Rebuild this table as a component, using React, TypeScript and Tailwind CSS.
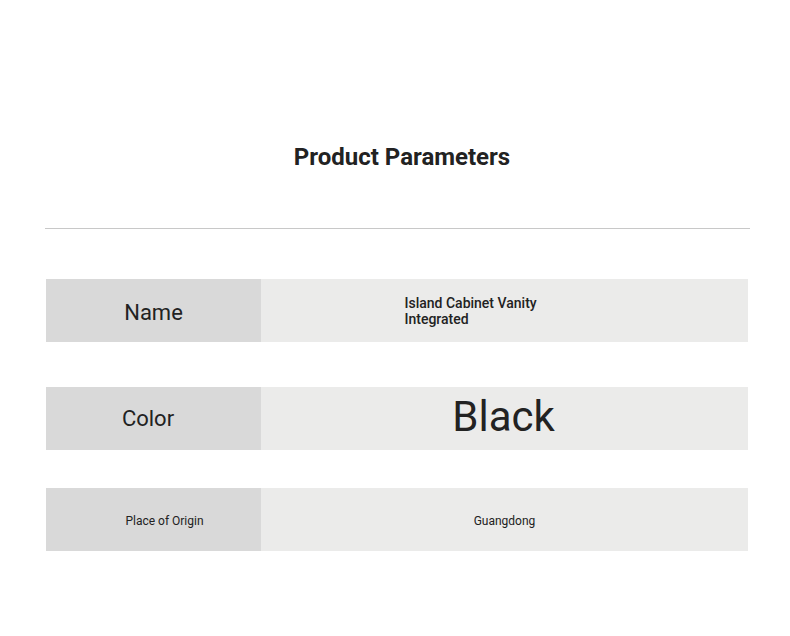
export default function App() {
  return (
    <div className="w-[790px] h-[636px] bg-white text-[#222222]" style={{ fontFamily: 'Roboto, "Liberation Sans", sans-serif' }}>
      <div className="pt-[141px] h-[32px] box-content flex justify-center">
        <h1 className="text-[24px] leading-[32px] font-bold text-[#222222] pl-[14px]">Product Parameters</h1>
      </div>
      <div className="mt-[55px] ml-[45px] w-[705px] h-px bg-[#c8c8c8]" />
      <div className="ml-[46px] w-[702px] mt-[50px]">
        <div className="flex h-[63px]">
          <div className="w-[215px] bg-[#d9d9d9] flex items-center justify-center pt-[3px]">
            <span className="text-[22px]">Name</span>
          </div>
          <div className="flex-1 bg-[#ebebea] flex items-center justify-center">
            <div className="w-[200px] text-[14px] leading-[16px] font-medium">
              Island Cabinet Vanity
              <br />
              Integrated
            </div>
          </div>
        </div>
        <div className="flex h-[63px] mt-[45px]">
          <div className="w-[215px] bg-[#d9d9d9] flex items-center justify-center pr-[11px]">
            <span className="text-[22px]">Color</span>
          </div>
          <div className="flex-1 bg-[#ebebea] flex items-center justify-center pb-[4px] pr-[2px]">
            <span className="text-[42px] leading-none">Black</span>
          </div>
        </div>
        <div className="flex h-[63px] mt-[38px]">
          <div className="w-[215px] bg-[#d9d9d9] flex items-center justify-center pl-[22px] pt-[3px]">
            <span className="text-[12px]">Place of Origin</span>
          </div>
          <div className="flex-1 bg-[#ebebea] flex items-center justify-center pt-[3px]">
            <span className="text-[12px]">Guangdong</span>
          </div>
        </div>
      </div>
    </div>
  );
}
